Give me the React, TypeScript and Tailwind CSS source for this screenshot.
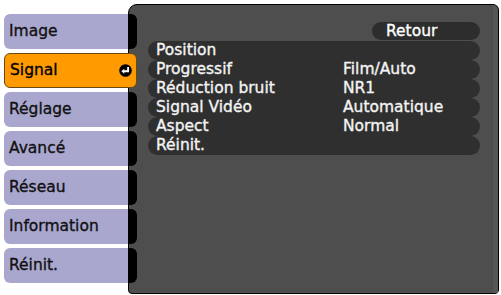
import React from 'react';

const menu = ['Image', 'Signal', 'Réglage', 'Avancé', 'Réseau', 'Information', 'Réinit.'];

const rows: [string, string][] = [
  ['Position', ''],
  ['Progressif', 'Film/Auto'],
  ['Réduction bruit', 'NR1'],
  ['Signal Vidéo', 'Automatique'],
  ['Aspect', 'Normal'],
  ['Réinit.', ''],
];

const EnterIcon: React.FC = () => (
  <svg width="13" height="13" viewBox="0 0 12 12">
    <circle cx="6" cy="6" r="5.8" fill="#000" />
    <path d="M8.4 2.8 V6.7 H4.4" stroke="#fff" strokeWidth="1.7" fill="none" />
    <path d="M2.2 6.7 L4.9 4.4 V9 Z" fill="#fff" />
  </svg>
);

const App: React.FC = () => {
  const selected = 'Signal';

  return (
    <div
      className="w-[501px] h-[295px] bg-white flex overflow-hidden [-webkit-text-stroke:0.35px_currentColor]"
      style={{ fontFamily: '"DejaVu Sans", Verdana, sans-serif' }}
    >
      {/* menu */}
      <div className="relative z-10 w-[137px] shrink-0 pl-[4px] pt-[14px] flex flex-col gap-[4px]">
        {menu.map((item) =>
          item === selected ? (
            <div
              key={item}
              className="h-[35px] flex items-center justify-between pl-[5px] pr-[4px] bg-[#ff9a00] border border-[#6b4a10] rounded-[6px] text-[15.5px] text-black"
            >
              <span>{item}</span>
              <EnterIcon />
            </div>
          ) : (
            <div key={item} className="h-[35px] flex">
              <div className="flex-1 flex items-center pl-[5px] bg-[#aaa7cf] rounded-l-[6px] text-[15.5px] text-[#111]">
                {item}
              </div>
              <div className="w-[9px] bg-black rounded-r-[6px]" />
            </div>
          )
        )}
      </div>

      {/* panel */}
      <div className="-ml-[9px] mt-[4px] mb-[1px] w-[371px] h-[290px] bg-[#4e4e4e] border border-black rounded-tl-[9px] rounded-tr-[6px] rounded-b-[4px] flex flex-col">
        <div className="flex-1 flex flex-col pt-[17px] pl-[19px] pr-[13px] border-r-[5px] border-[#565656] rounded-tr-[6px]">
          <div className="flex justify-end">
            <div className="w-[108px] h-[18px] rounded-full bg-[#2d2d2d] text-white text-[15.5px] leading-[18px] pl-[14px]">
              Retour
            </div>
          </div>
          <div className="mt-[1px] flex flex-col">
            {rows.map(([label, value]) => (
              <div
                key={label}
                className="h-[19px] rounded-full bg-[#2f2f2f] flex items-center text-[15.5px] leading-[19px] text-[#f4f4f4]"
              >
                <span className="w-[195px] pl-[8px]">{label}</span>
                <span>{value}</span>
              </div>
            ))}
          </div>
        </div>
      </div>
    </div>
  );
};

export default App;
